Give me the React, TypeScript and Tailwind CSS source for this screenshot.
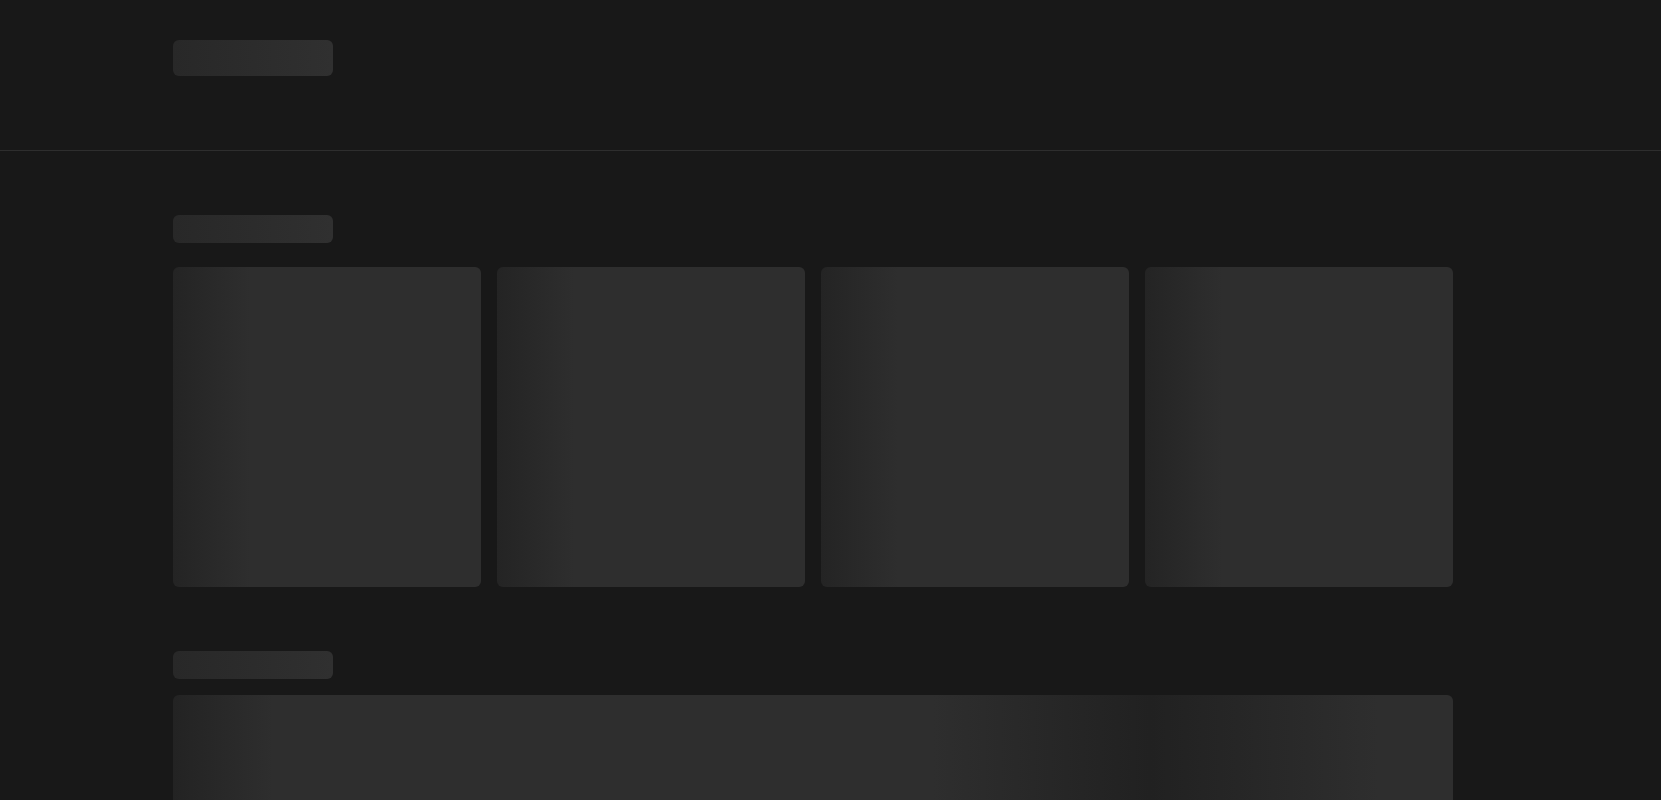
export default function App() {
  return (
    <div className="min-h-screen bg-[#181818] font-['Liberation_Sans',sans-serif]">
      <header className="h-[151px] border-b border-[#2e2e2e] pl-[173px] pr-[208px] pt-10">
        <div className="h-9 w-40 rounded-md bg-linear-to-r from-[#282828] to-[#303030]" />
      </header>

      <main className="pl-[173px] pr-[208px] pt-16 pb-16">
        <section>
          <div className="mb-6 h-7 w-40 rounded-md bg-linear-to-r from-[#282828] to-[#303030]" />
          <div className="grid grid-cols-4 gap-4">
            {[0, 1, 2, 3].map((i) => (
              <div
                key={i}
                className="h-80 rounded-md bg-linear-to-r from-[#242424] from-0% to-[#2e2e2e] to-25%"
              />
            ))}
          </div>
        </section>

        <section className="mt-16">
          <div className="mb-4 h-7 w-40 rounded-md bg-linear-to-r from-[#282828] to-[#303030]" />
          <div className="h-[400px] rounded-md bg-[linear-gradient(90deg,#232323_0px,#2e2e2e_100px,#2e2e2e_760px,#212121_977px,#2e2e2e_1205px)]" />
        </section>
      </main>
    </div>
  );
}
